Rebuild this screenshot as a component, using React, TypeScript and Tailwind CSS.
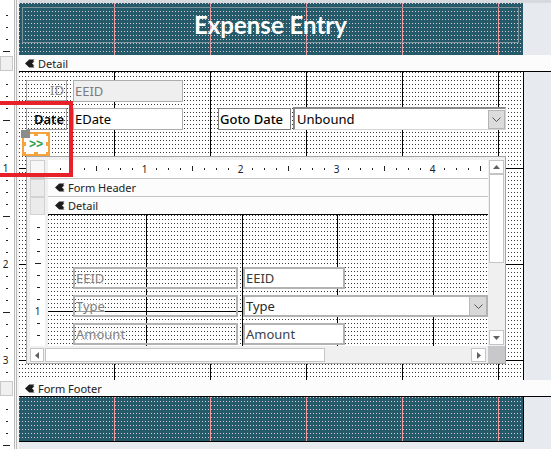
import React from "react";

const WHITE_DOTS =
  "bg-[#3a3a3a] bg-[image:linear-gradient(90deg,transparent_1px,#ffffff_1px),linear-gradient(transparent_1px,#ffffff_1px)] bg-[length:3px_4px]";
const TEAL_DOTS =
  "bg-[#d9cfd2] bg-[image:linear-gradient(90deg,transparent_1px,#245a6a_1px),linear-gradient(transparent_1px,#245a6a_1px)] bg-[length:3px_4px]";

const MAIN_V = ["left-[95px]", "left-[191px]", "left-[287px]", "left-[383px]", "left-[479px]"];
const MAIN_H = ["top-[96px]", "top-[192px]", "top-[288px]"];
const SUB_V = ["left-[98px]", "left-[194px]", "left-[289px]", "left-[385px]"];

function SectionIcon() {
  return (
    <svg width="10" height="9" viewBox="0 0 10 9" className="block shrink-0">
      <path d="M0 4.5 L4.2 0.5 H9.5 L7.8 2.2 L9.5 2.2 L7 4.5 L9.5 6.8 L7.8 6.8 L9.5 8.5 H4.2 Z" fill="#1c1c1c" />
    </svg>
  );
}

function SectionBar({ label, className }: { label: string; className: string }) {
  return (
    <div className={"flex items-center gap-[3px] bg-[#fcfcfc] " + className}>
      <SectionIcon />
      <span className="text-[11px] leading-none text-[#222]">{label}</span>
    </div>
  );
}

function MainRuler() {
  const els: React.ReactNode[] = [];
  const small = (y: number, key: string) => <rect key={key} x={6} y={y} width={2} height={1} fill="#222" />;
  const long = (y: number, key: string) => <rect key={key} x={3} y={y} width={7} height={1} fill="#222" />;
  for (let k = 1; k <= 4; k++) {
    const y = 3 + 12 * k;
    els.push(k === 4 ? long(y, "h" + k) : small(y, "h" + k));
  }
  for (let k = 1; k <= 25; k++) {
    const y = 72 + 12 * k;
    if (k % 8 === 0) {
      els.push(
        <text key={"d" + k} x={5.5} y={y + 3.5} fontSize={10} fill="#222" textAnchor="middle" fontFamily="Noto Sans, sans-serif">
          {k / 8}
        </text>
      );
    } else if (k % 4 === 0) els.push(long(y, "d" + k));
    else els.push(small(y, "d" + k));
  }
  for (let k = 1; k <= 4; k++) {
    const y = 397 + 12 * k;
    els.push(k === 4 ? long(y, "f" + k) : small(y, "f" + k));
  }
  return (
    <svg width="19" height="449" className="block shrink-0">
      <rect x={0} y={0} width={14} height={449} fill="#ffffff" />
      <rect x={14} y={0} width={1} height={449} fill="#b8b8b8" />
      <rect x={15} y={0} width={1} height={449} fill="#f6f6f6" />
      <rect x={16} y={0} width={1} height={449} fill="#b8b8b8" />
      <rect x={17} y={0} width={2} height={449} fill="#f3f3f3" />
      <rect x={0.5} y={56.5} width={12} height={14} fill="#f0f0f0" stroke="#c8c8c8" />
      <rect x={0.5} y={381.5} width={12} height={14} fill="#f0f0f0" stroke="#c8c8c8" />
      {els}
    </svg>
  );
}

function SubTopRuler() {
  const els: React.ReactNode[] = [];
  for (let k = 1; k <= 36; k++) {
    const x = 12 * k;
    if (k % 8 === 0) {
      els.push(
        <text key={k} x={x + 0.5} y={12.5} fontSize={10} fill="#222" textAnchor="middle" fontFamily="Noto Sans, sans-serif">
          {k / 8}
        </text>
      );
    } else if (k % 4 === 0) els.push(<rect key={k} x={x} y={6} width={1} height={5} fill="#222" />);
    else els.push(<rect key={k} x={x} y={8} width={1} height={2} fill="#222" />);
  }
  return (
    <svg width="440" height="18" className="block">
      <rect x={0} y={0} width={440} height={18} fill="#ffffff" />
      {els}
    </svg>
  );
}

function SubLeftRuler() {
  const els: React.ReactNode[] = [];
  for (let k = 1; k <= 10; k++) {
    const y = 12 * k;
    if (k === 8) {
      els.push(
        <text key={k} x={7.5} y={y + 3.5} fontSize={10} fill="#222" textAnchor="middle" fontFamily="Noto Sans, sans-serif">
          1
        </text>
      );
    } else if (k % 4 === 0) els.push(<rect key={k} x={5} y={y} width={6} height={1} fill="#222" />);
    else els.push(<rect key={k} x={7} y={y} width={3} height={1} fill="#222" />);
  }
  return (
    <svg width="15" height="131" className="block">
      <rect x={0} y={0} width={15} height={131} fill="#ffffff" />
      {els}
    </svg>
  );
}

function Chevron() {
  return (
    <svg width="9" height="5" viewBox="0 0 9 5" className="block">
      <polyline points="0.5,0.5 4.5,4.5 8.5,0.5" fill="none" stroke="#555" strokeWidth="1" />
    </svg>
  );
}

function Tri({ dir }: { dir: "up" | "down" | "left" | "right" }) {
  const pts =
    dir === "up" ? "0,4 7,4 3.5,0" : dir === "down" ? "0,0 7,0 3.5,4" : dir === "left" ? "4,0 4,7 0,3.5" : "0,0 0,7 4,3.5";
  const w = dir === "up" || dir === "down" ? 7 : 4;
  const h = dir === "up" || dir === "down" ? 4 : 7;
  return (
    <svg width={w} height={h} viewBox={`0 0 ${w} ${h}`} className="block">
      <polygon points={pts} fill="#606060" />
    </svg>
  );
}

function Subform() {
  return (
    <div className="absolute left-[7px] top-[84px] flex h-[208px] w-[480px] flex-col border border-[#a4a4a4] bg-[#f0f0f0] pl-[3px] pt-[3px]">
      <div className="flex h-[186px]">
        <div className="flex w-[458px] flex-col">
          <div className="flex h-[19px] border-b border-[#c4c4c4]">
            <div className="h-[18px] w-[15px] border border-[#cfcfcf] bg-[#f7f7f7]" />
            <div className="w-[3px]" />
            <SubTopRuler />
          </div>
          <div className="flex flex-1">
            <div className="flex w-[15px] flex-col">
              <div className="h-[18px] border border-[#d2d2d2] bg-[#ebebeb]" />
              <div className="h-[18px] border border-[#d2d2d2] bg-[#ebebeb]" />
              <SubLeftRuler />
            </div>
            <div className="w-[3px]" />
            <div className="flex w-[440px] flex-col">
              <SectionBar label="Form Header" className="h-[18px] border-b border-[#c4c4c4] pl-[7px]" />
              <SectionBar label="Detail" className="h-[18px] border-b border-black pl-[7px]" />
              <div className={"relative h-[131px] overflow-hidden " + WHITE_DOTS}>
                {SUB_V.map((c) => (
                  <div key={c} className={"absolute top-0 bottom-0 w-px bg-black " + c} />
                ))}
                <div className="absolute left-0 right-0 top-[96px] h-px bg-black" />
                <div className="absolute left-[25px] top-[52px] flex h-[22px] w-[165px] items-center border-2 border-[#b2b2b2] pl-px text-[13px] leading-none text-[#7d7d7d]">
                  <span className="bg-white/60">EEID</span>
                </div>
                <div className="absolute left-[195px] top-[52px] flex h-[22px] w-[102px] items-center border-2 border-[#b2b2b2] bg-white pl-px text-[13px] leading-none text-[#3a3a3a]">
                  EEID
                </div>
                <div className="absolute left-[25px] top-[80px] flex h-[22px] w-[165px] items-center border-2 border-[#b2b2b2] pl-px text-[13px] leading-none text-[#7d7d7d]">
                  <span className="bg-white/60">Type</span>
                </div>
                <div className="absolute left-[195px] top-[80px] flex h-[22px] w-[245px] items-center border-2 border-[#b2b2b2] bg-white pl-px text-[13px] leading-none text-[#2a2a2a]">
                  <span className="flex-1">Type</span>
                  <div className="flex h-full w-[17px] items-center justify-center border-l border-[#b8b8b8] bg-[#d9d9d9]">
                    <Chevron />
                  </div>
                </div>
                <div className="absolute left-[25px] top-[108px] flex h-[22px] w-[165px] items-center border-2 border-[#b2b2b2] pl-px text-[13px] leading-none text-[#7d7d7d]">
                  <span className="bg-white/60">Amount</span>
                </div>
                <div className="absolute left-[195px] top-[108px] flex h-[22px] w-[102px] items-center border-2 border-[#b2b2b2] bg-white pl-px text-[13px] leading-none text-[#3a4350]">
                  Amount
                </div>
              </div>
            </div>
          </div>
        </div>
        <div className="flex w-[17px] flex-col bg-[#f0f0f0] pl-px">
          <div className="flex h-[14px] w-[15px] items-center justify-center border border-[#c4c4c4] bg-white">
            <Tri dir="up" />
          </div>
          <div className="h-[89px] w-[15px] border border-[#c4c4c4] bg-white" />
          <div className="flex-1" />
          <div className="mb-px flex h-[15px] w-[15px] items-center justify-center border border-[#c4c4c4] bg-white">
            <Tri dir="down" />
          </div>
        </div>
      </div>
      <div className="flex h-[17px]">
        <div className="flex w-[458px] items-start bg-[#f0f0f0] pt-[2px]">
          <div className="flex h-[14px] w-[14px] items-center justify-center border border-[#c4c4c4] bg-white">
            <Tri dir="left" />
          </div>
          <div className="ml-px h-[14px] w-[280px] border border-[#c4c4c4] bg-white" />
          <div className="flex-1" />
          <div className="mr-[2px] flex h-[14px] w-[15px] items-center justify-center border border-[#c4c4c4] bg-white">
            <Tri dir="right" />
          </div>
        </div>
        <div className="w-[17px] bg-[#c8c8cb]" />
      </div>
    </div>
  );
}

function Handle({ pos }: { pos: string }) {
  return <div className={"absolute h-[4px] w-[4px] bg-[#f5a33a] " + pos} />;
}

export default function App() {
  return (
    <div className="relative flex h-[449px] w-[551px] overflow-hidden bg-[#e7eaee] font-['Noto_Sans',sans-serif]">
      <MainRuler />
      <div className="flex w-[532px] flex-col">
        <div className="h-[3px] bg-[#d6d9dd]" />
        <div className="flex h-[52px]">
          <div className={"relative h-[52px] w-[504px] " + TEAL_DOTS}>
            {MAIN_V.map((c) => (
              <div key={c} className={"absolute top-0 bottom-0 w-px bg-[#e89aa4] " + c} />
            ))}
            <div className="absolute left-[3px] top-[4px] flex h-[36px] w-[497px] items-center justify-center border border-[#7f959b]">
              <span className="font-['Lato',sans-serif] text-[24px] font-bold leading-none text-white">Expense Entry</span>
            </div>
          </div>
          <div className="flex-1" />
        </div>
        <SectionBar label="Detail" className="h-[17px] border-b border-black pl-[6px]" />
        <div className="flex h-[308px]">
          <div className={"relative h-[308px] w-[505px] border-r border-black " + WHITE_DOTS}>
            {MAIN_V.map((c) => (
              <div key={c} className={"absolute top-0 bottom-0 w-px bg-black " + c} />
            ))}
            {MAIN_H.map((c) => (
              <div key={c} className={"absolute left-0 right-0 h-px bg-black " + c} />
            ))}
            <div className="absolute left-[7px] top-[8px] flex h-[21px] w-[41px] items-center justify-end border border-[#a3a3a3] pr-[2px] text-[13px] leading-none text-[#8a8a8a]">
              ID
            </div>
            <div className="absolute left-[54px] top-[8px] flex h-[22px] w-[110px] items-center border border-[#adadad] bg-[#efefef] pl-[1px] text-[13px] leading-none text-[#7c7c7c]">
              EEID
            </div>
            <div className="absolute left-[7px] top-[36px] flex h-[22px] w-[41px] items-center justify-end border border-[#9c9c9c] pr-[2px] text-[13px] font-semibold leading-none text-black">
              Date
            </div>
            <div className="absolute left-[54px] top-[36px] flex h-[22px] w-[110px] items-center border border-[#adadad] bg-white pl-[1px] text-[13px] leading-none text-black">
              EDate
            </div>
            <div className="absolute left-[199px] top-[36px] flex h-[22px] w-[73px] items-center border border-[#7c7c7c] bg-white pl-px text-[13px] font-medium leading-none text-black">
              Goto Date
            </div>
            <div className="absolute left-[274px] top-[35px] flex h-[23px] w-[213px] items-center border-b border-l-2 border-r border-t-2 border-b-[#d4d4d4] border-l-[#8a8a8a] border-r-[#d4d4d4] border-t-[#8a8a8a] bg-white pl-[2px] text-[13px] leading-none text-black">
              <span className="flex-1">Unbound</span>
              <div className="flex h-[19px] w-[17px] items-center justify-center border border-[#b4b4b4] bg-[#dcdcdc]">
                <Chevron />
              </div>
            </div>
            <div className="absolute left-[3px] top-[60px] flex h-[24px] w-[28px] items-center justify-center border-2 border-[#f5a33a] bg-white">
              <span className="font-['Liberation_Sans',sans-serif] text-[12px] font-bold leading-none text-[#1fa04f]">&gt;&gt;</span>
              <Handle pos="left-[-2px] top-[-2px]" />
              <Handle pos="right-[-2px] top-[-2px]" />
              <Handle pos="left-[-2px] bottom-[-2px]" />
              <Handle pos="right-[-2px] bottom-[-2px]" />
              <Handle pos="left-[10px] top-[-2px]" />
              <Handle pos="left-[10px] bottom-[-2px]" />
              <Handle pos="left-[-2px] top-[8px]" />
              <Handle pos="right-[-2px] top-[8px]" />
            </div>
            <div className="absolute left-[2px] top-[58px] h-[8px] w-[9px] bg-[#8c8c8c]" />
            <Subform />
          </div>
          <div className="flex-1" />
        </div>
        <SectionBar label="Form Footer" className="h-[17px] border-b border-black pl-[6px]" />
        <div className="flex h-[45px]">
          <div className={"relative h-[45px] w-[505px] border-b border-r border-black " + TEAL_DOTS}>
            {MAIN_V.map((c) => (
              <div key={c} className={"absolute top-0 bottom-0 w-px bg-[#e89aa4] " + c} />
            ))}
          </div>
          <div className="flex-1" />
        </div>
      </div>
      <div className="absolute left-[-10px] top-[101px] h-[76px] w-[83px] border-4 border-[#e8202a]" />
    </div>
  );
}
